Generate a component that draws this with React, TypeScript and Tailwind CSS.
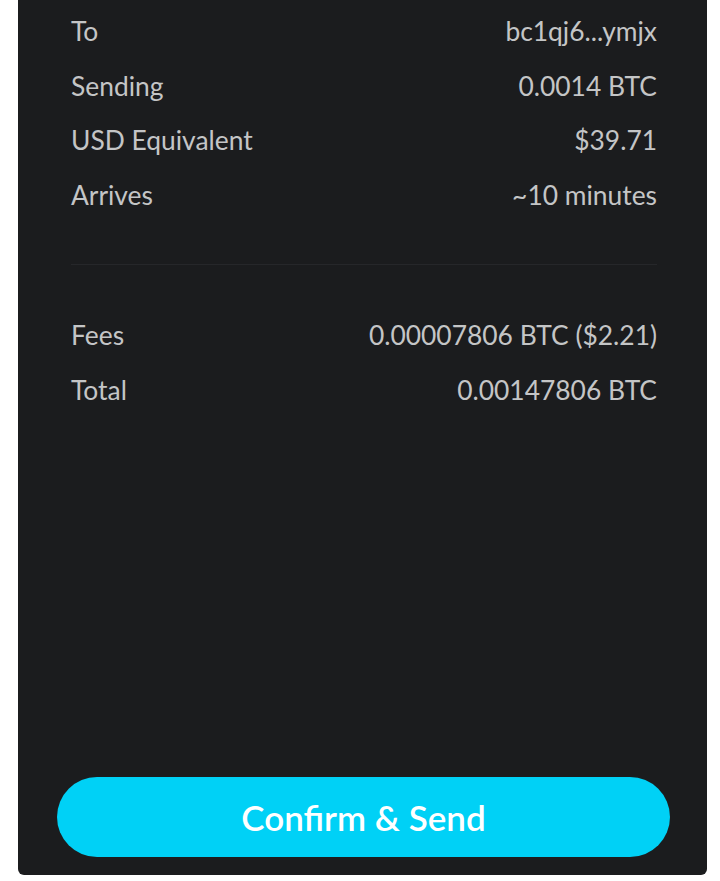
const DETAILS = [
  { label: "To", value: "bc1qj6...ymjx" },
  { label: "Sending", value: "0.0014 BTC" },
  { label: "USD Equivalent", value: "$39.71" },
  { label: "Arrives", value: "~10 minutes" },
];

const COSTS = [
  { label: "Fees", value: "0.00007806 BTC ($2.21)" },
  { label: "Total", value: "0.00147806 BTC" },
];

function Row({ label, value }: { label: string; value: string }) {
  return (
    <div className="flex h-[54.5px] items-center justify-between">
      <span>{label}</span>
      <span>{value}</span>
    </div>
  );
}

export default function App() {
  return (
    <main
      className="h-[881px] w-[720px] bg-white"
      style={{ fontFamily: "Lato, 'Open Sans', sans-serif" }}
    >
      <div className="ml-[18px] flex h-[875px] w-[689px] flex-col rounded-b-md bg-[#1b1c1e] text-[26.4px] text-[#c4c5c6]">
        <div className="pl-[53px] pr-[50px] pt-[5px]">
          {DETAILS.map((r) => (
            <Row key={r.label} {...r} />
          ))}
          <div className="mt-[41px] h-px bg-[#26272a]" />
          <div className="mt-[44px]">
            {COSTS.map((r) => (
              <Row key={r.label} {...r} />
            ))}
          </div>
        </div>

        <div className="mt-auto pl-[39px] pr-[37px] pb-[18px]">
          <button className="h-[80px] w-full rounded-full bg-[#00d1f6] text-[35px] font-semibold text-white">
            Confirm &amp; Send
          </button>
        </div>
      </div>
    </main>
  );
}
